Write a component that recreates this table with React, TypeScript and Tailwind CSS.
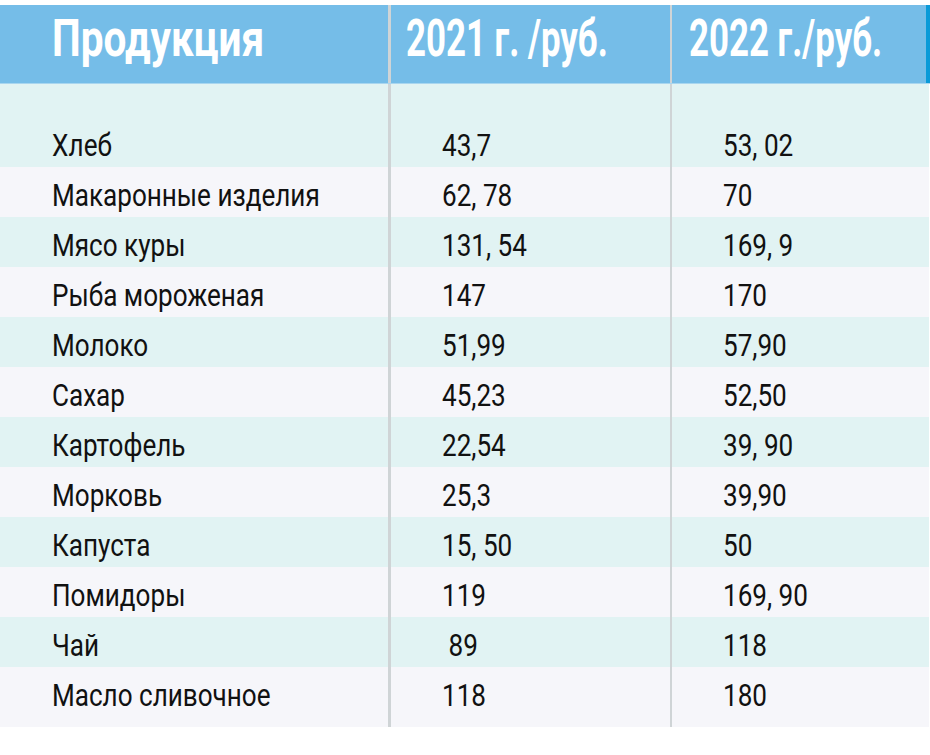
import React from "react";

const rows: [string, string, string][] = [
  ["Макаронные изделия", "62, 78", "70"],
  ["Мясо куры", "131, 54", "169, 9"],
  ["Рыба мороженая", "147", "170"],
  ["Молоко", "51,99", "57,90"],
  ["Сахар", "45,23", "52,50"],
  ["Картофель", "22,54", "39, 90"],
  ["Морковь", "25,3", "39,90"],
  ["Капуста", "15, 50", "50"],
  ["Помидоры", "119", "169, 90"],
  ["Чай", "\u00a089", "118"],
  ["Масло сливочное", "118", "180"],
];

function T({ children }: { children: React.ReactNode }) {
  return (
    <span className="inline-block origin-left scale-x-[0.815] whitespace-pre text-[32px] leading-none text-[#111]">
      {children}
    </span>
  );
}

export default function App() {
  return (
    <div className="w-[930px] h-[755px] bg-white pt-[5px] font-['Roboto','Liberation_Sans',sans-serif] overflow-hidden">
      {/* header */}
      <div className="flex h-[79px] bg-[#75bde8] border-b border-[#a9d6ef]">
        <div className="w-[391px] shrink-0 overflow-hidden border-r-[3px] border-[#cfd4d6] flex items-center pl-[52px] pb-[10px]">
          <span className="inline-block origin-left scale-x-[0.78] whitespace-pre text-[52px] font-bold leading-none text-white">
            Продукция
          </span>
        </div>
        <div className="w-[281px] shrink-0 overflow-hidden border-r-[2px] border-[#cfd4d6] flex items-center pl-[15px] pb-[10px]">
          <span className="inline-block origin-left scale-x-[0.67] whitespace-pre text-[52px] font-bold leading-none text-white">
            2021 г. /руб.
          </span>
        </div>
        <div className="flex-1 min-w-0 overflow-hidden border-r-[4px] border-[#0a9ad8] flex items-center pl-[17px] pb-[10px]">
          <span className="inline-block origin-left scale-x-[0.67] whitespace-pre text-[52px] font-bold leading-none text-white">
            2022 г./руб.
          </span>
        </div>
      </div>
      {/* first tall row */}
      <div className="flex h-[83px] bg-[#e1f3f3] mr-[1px]">
        <div className="w-[391px] shrink-0 border-r-[3px] border-[#cfd4d6] flex items-end pl-[52px] pb-[6px]">
          <T>Хлеб</T>
        </div>
        <div className="w-[281px] shrink-0 border-r-[2px] border-[#cfd4d6] flex items-end pl-[51px] pb-[6px]">
          <T>43,7</T>
        </div>
        <div className="flex-1 min-w-0 flex items-end pl-[51px] pb-[6px]">
          <T>53, 02</T>
        </div>
      </div>
      {rows.map((r, i) => {
        const last = i === rows.length - 1;
        const cell = last ? "pt-[6px] pb-[10px]" : "pt-[6px]";
        return (
          <div
            key={i}
            className={`flex mr-[1px] ${i % 2 === 0 ? "bg-[#f6f6fa]" : "bg-[#e1f3f3]"} ${last ? "h-[60px]" : "h-[50px]"}`}
          >
            <div className={`w-[391px] shrink-0 border-r-[3px] border-[#cfd4d6] flex items-center pl-[52px] ${cell}`}>
              <T>{r[0]}</T>
            </div>
            <div className={`w-[281px] shrink-0 border-r-[2px] border-[#cfd4d6] flex items-center pl-[51px] ${cell}`}>
              <T>{r[1]}</T>
            </div>
            <div className={`flex-1 min-w-0 flex items-center pl-[51px] ${cell}`}>
              <T>{r[2]}</T>
            </div>
          </div>
        );
      })}
    </div>
  );
}
